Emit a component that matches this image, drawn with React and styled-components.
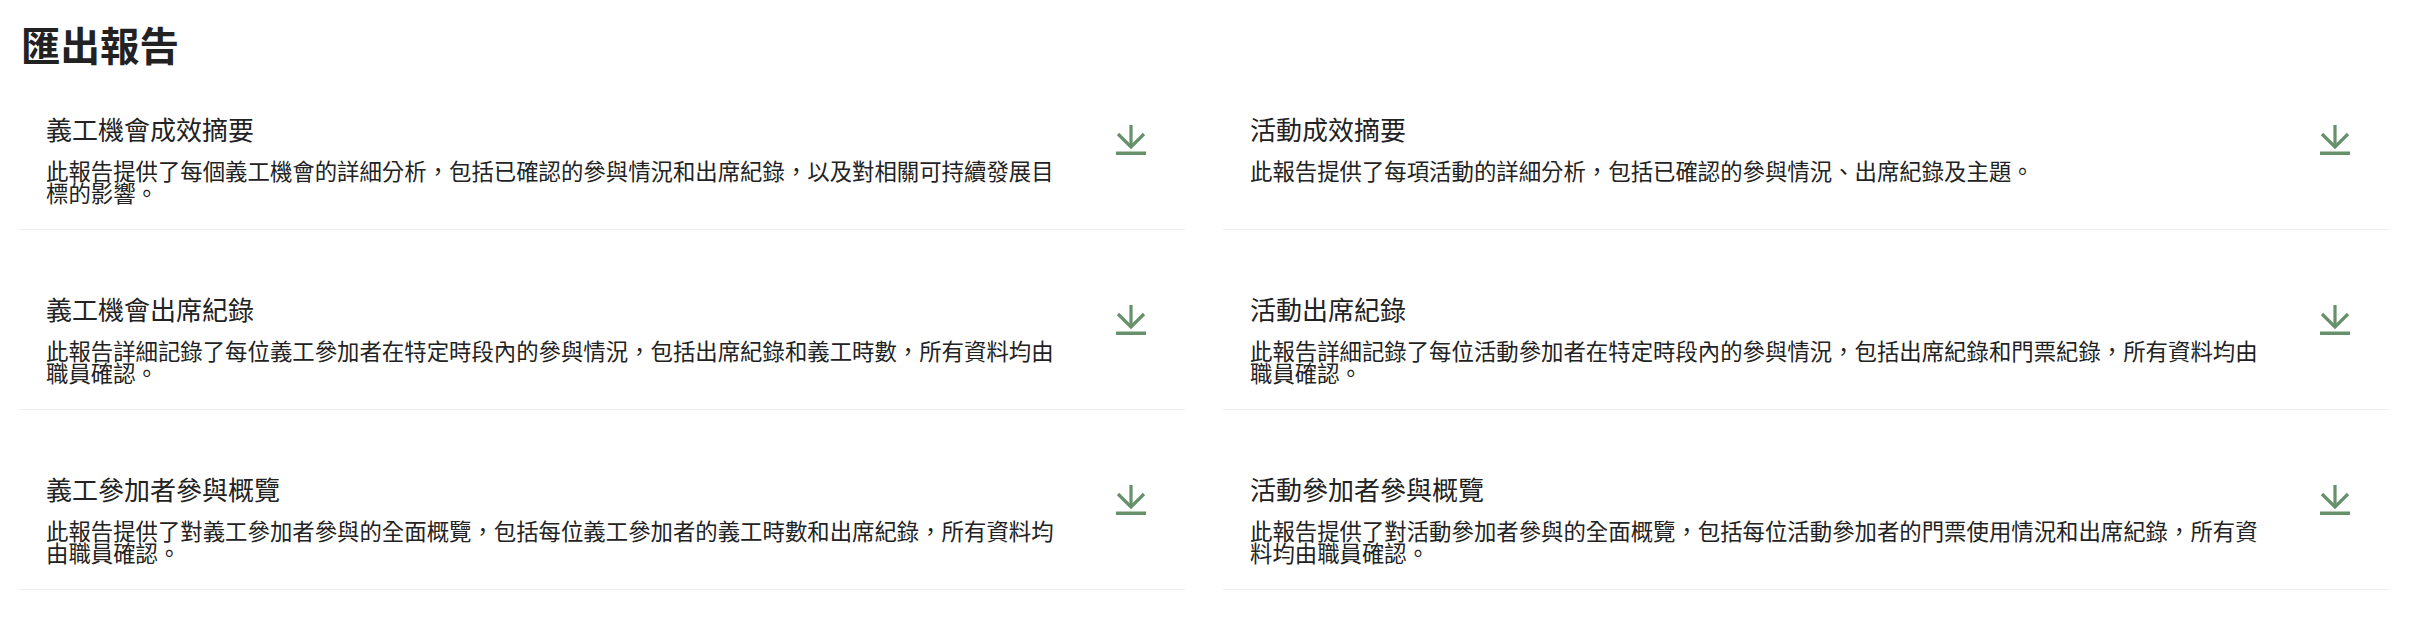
import React from "react";
import styled, { createGlobalStyle } from "styled-components";

const GlobalStyle = createGlobalStyle`
  html, body { margin: 0; padding: 0; background: #ffffff; }
  body {
    font-family: "Noto Sans CJK TC", "Noto Sans", "Liberation Sans", sans-serif;
    color: #222222;
  }
`;

const Page = styled.main`
  padding: 24px 37px 0 19px;
`;

const Heading = styled.h1`
  margin: 0 0 26px 2px;
  font-size: 39.5px;
  line-height: 1;
  font-weight: 700;
  color: #222222;
`;

const Grid = styled.div`
  display: grid;
  grid-template-columns: 1fr 1fr;
  column-gap: 38px;
`;

const Item = styled.section`
  display: flex;
  align-items: flex-start;
  gap: 54px;
  padding: 26px 39px 26px 27px;
  margin-bottom: 40px;
  border-bottom: 1px solid #ececec;
`;

const TextBlock = styled.div`
  flex: 1;
  min-width: 0;
`;

const Title = styled.h2`
  margin: 0 0 17px;
  font-size: 26px;
  line-height: 1;
  font-weight: 400;
  color: #222222;
`;

const Desc = styled.p`
  margin: 0;
  font-size: 22.4px;
  line-height: 22px;
  color: #222222;
`;

const DownloadButton = styled.button`
  flex: none;
  width: 30px;
  height: 31px;
  margin-top: 9px;
  padding: 0;
  border: 0;
  background: none;
  cursor: pointer;
  color: #66916a;
  display: flex;
`;

const DownloadIcon = () => (
  <svg width="30" height="31" viewBox="0 0 30 31" fill="none">
    <path d="M15 0 V22" stroke="currentColor" strokeWidth="3.2" />
    <path d="M2 9 L15 22 L28 9" stroke="currentColor" strokeWidth="3.2" />
    <rect x="0" y="26.5" width="30" height="3.5" fill="currentColor" />
  </svg>
);

const reports = [
  {
    title: "義工機會成效摘要",
    desc: "此報告提供了每個義工機會的詳細分析，包括已確認的參與情況和出席紀錄，以及對相關可持續發展目標的影響。",
  },
  {
    title: "活動成效摘要",
    desc: "此報告提供了每項活動的詳細分析，包括已確認的參與情況、出席紀錄及主題。",
  },
  {
    title: "義工機會出席紀錄",
    desc: "此報告詳細記錄了每位義工參加者在特定時段內的參與情況，包括出席紀錄和義工時數，所有資料均由職員確認。",
  },
  {
    title: "活動出席紀錄",
    desc: "此報告詳細記錄了每位活動參加者在特定時段內的參與情況，包括出席紀錄和門票紀錄，所有資料均由職員確認。",
  },
  {
    title: "義工參加者參與概覽",
    desc: "此報告提供了對義工參加者參與的全面概覽，包括每位義工參加者的義工時數和出席紀錄，所有資料均由職員確認。",
  },
  {
    title: "活動參加者參與概覽",
    desc: "此報告提供了對活動參加者參與的全面概覽，包括每位活動參加者的門票使用情況和出席紀錄，所有資料均由職員確認。",
  },
];

export default function App() {
  return (
    <>
      <GlobalStyle />
      <Page>
        <Heading>匯出報告</Heading>
        <Grid>
          {reports.map((r) => (
            <Item key={r.title}>
              <TextBlock>
                <Title>{r.title}</Title>
                <Desc>{r.desc}</Desc>
              </TextBlock>
              <DownloadButton aria-label="下載">
                <DownloadIcon />
              </DownloadButton>
            </Item>
          ))}
        </Grid>
      </Page>
    </>
  );
}
